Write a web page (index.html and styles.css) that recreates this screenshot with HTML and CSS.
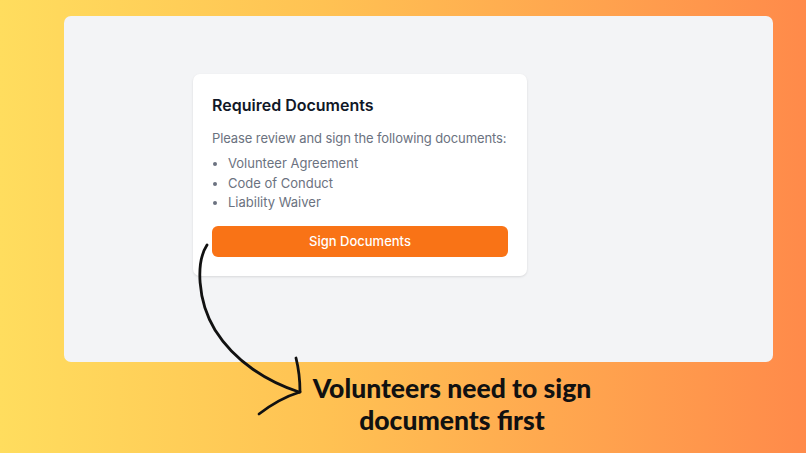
FILE: index.html
```html
<!DOCTYPE html>
<html lang="en">
<head>
<meta charset="utf-8">
<title>Required Documents</title>
<link rel="stylesheet" href="styles.css">
</head>
<body>
<div class="stage">
  <div class="panel">
    <div class="card">
      <h2 class="card-title">Required Documents</h2>
      <p class="card-text">Please review and sign the following documents:</p>
      <ul class="doc-list">
        <li>Volunteer Agreement</li>
        <li>Code of Conduct</li>
        <li>Liability Waiver</li>
      </ul>
      <button class="sign-btn">Sign Documents</button>
    </div>
  </div>
  <div class="caption">Volunteers need to sign<br>documents first</div>
  <svg class="arrow" width="806" height="453" viewBox="0 0 806 453">
    <path d="M207 245 C 196 262, 197 300, 215 330 C 235 362, 268 382, 299 392" fill="none" stroke="#111" stroke-width="2.8" stroke-linecap="round"/>
    <path d="M296 358 C 299 370, 300 382, 300 392" fill="none" stroke="#111" stroke-width="2.8" stroke-linecap="round"/>
    <path d="M259 414 C 272 404, 287 396, 300 392" fill="none" stroke="#111" stroke-width="2.8" stroke-linecap="round"/>
  </svg>
</div>
</body>
</html>
```
FILE: styles.css
```css
* { box-sizing: border-box; }
html, body { margin: 0; padding: 0; }
body { width: 806px; height: 453px; overflow: hidden; }
.stage {
  position: relative;
  width: 806px;
  height: 453px;
  background: linear-gradient(90deg, #ffdd5e 0%, #ffc253 40%, #ffa24e 75%, #ff8a4a 100%);
  padding: 16px 33px 0 64px;
  font-family: Inter, "Noto Sans", sans-serif;
}
.panel {
  width: 709px;
  height: 346px;
  background: #f3f4f6;
  border-radius: 7px;
  padding: 58px 0 0 129px;
}
.card {
  width: 334px;
  background: #ffffff;
  border-radius: 7px;
  box-shadow: 0 1px 3px rgba(0,0,0,0.08), 0 1px 2px rgba(0,0,0,0.04);
  padding: 20px 19px 19px 19px;
}
.card-title {
  margin: 0;
  font-size: 16px;
  line-height: 22px;
  font-weight: 600;
  color: #111827;
}
.card-text {
  margin: 12px 0 6px;
  font-size: 13px;
  line-height: 20px;
  color: #6b7280;
  white-space: nowrap;
  letter-spacing: -0.1px;
}
.doc-list {
  margin: 0 0 13px;
  padding-left: 16px;
  font-size: 13px;
  line-height: 19.5px;
  color: #6b7280;
}
.sign-btn {
  display: block;
  width: 100%;
  height: 31px;
  border: none;
  border-radius: 6px;
  background: #f97316;
  color: #fff;
  font-family: Inter, "Noto Sans", sans-serif;
  font-size: 13px;
  font-weight: 500;
}
.caption {
  width: 340px;
  margin: 10px 0 0 218px;
  text-align: center;
  font-family: Lato, sans-serif;
  font-weight: 900;
  font-size: 26.5px;
  line-height: 32px;
  color: #111;
}
.arrow {
  position: absolute;
  left: 0;
  top: 0;
  pointer-events: none;
}
```
